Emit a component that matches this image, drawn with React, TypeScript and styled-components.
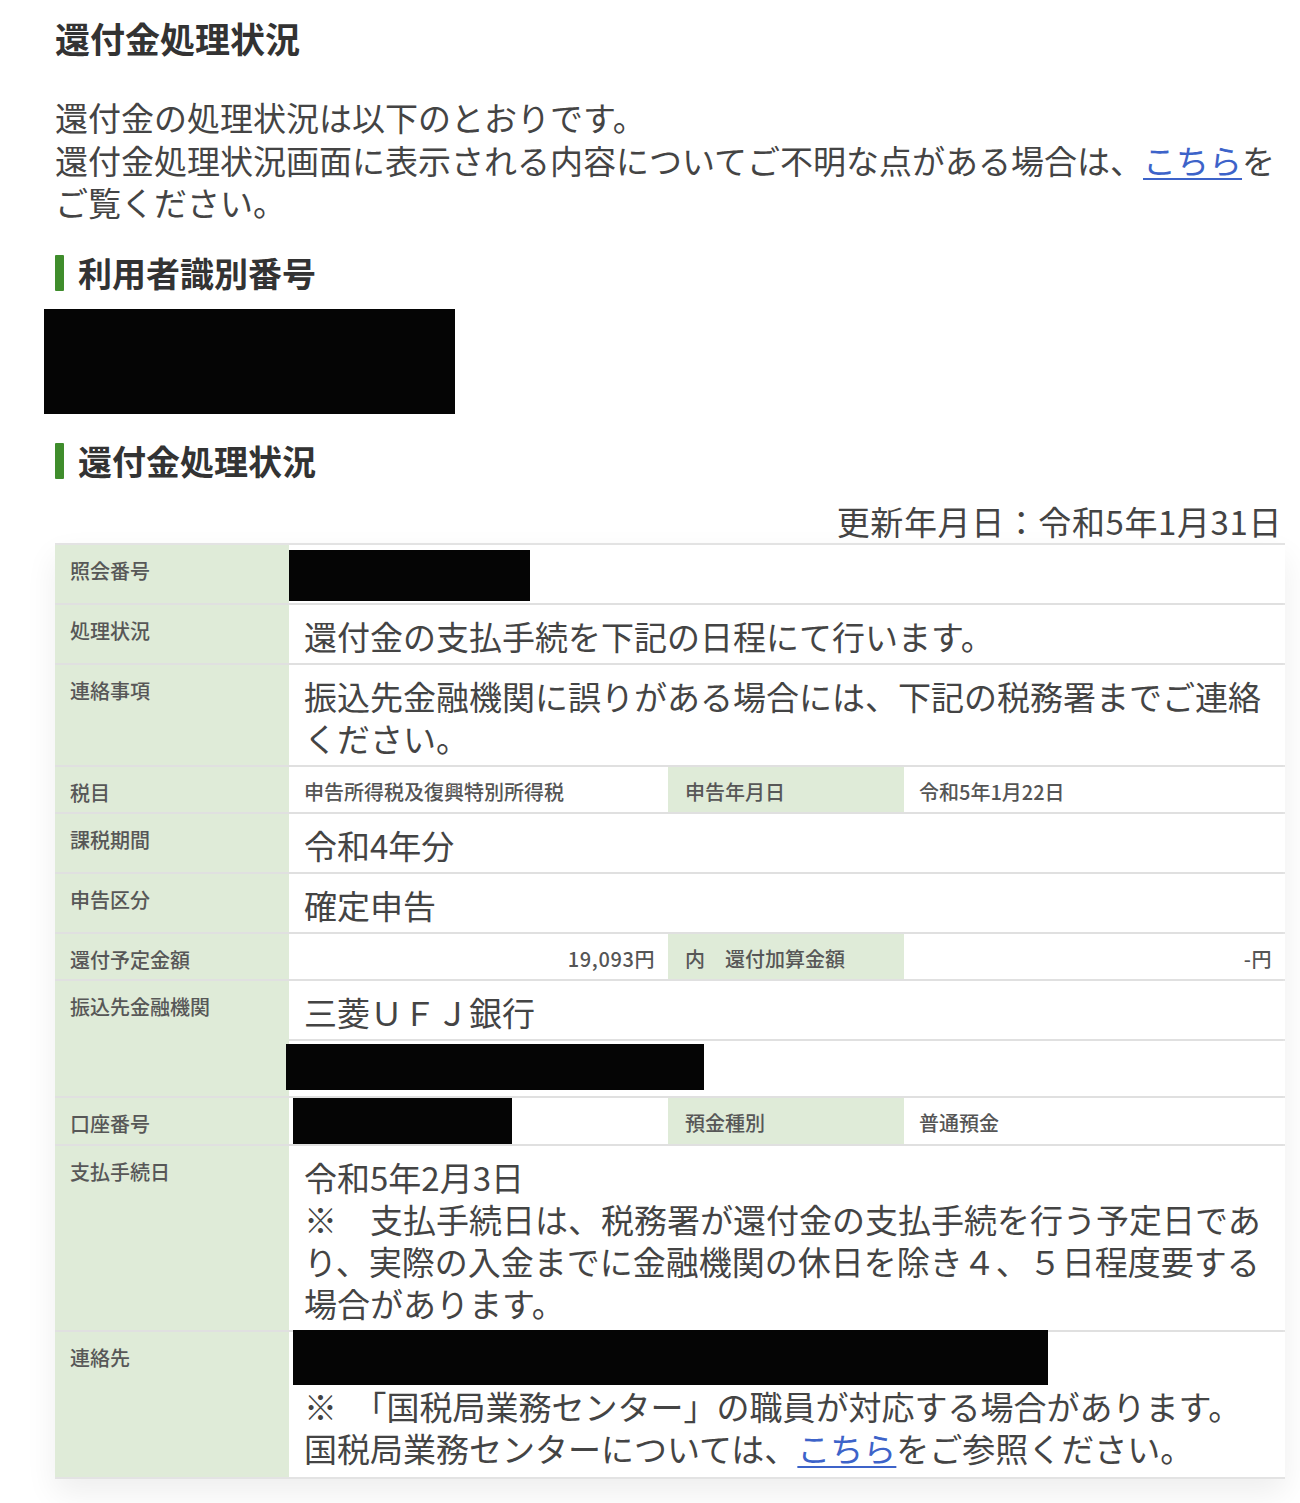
import React from "react";
import styled, { createGlobalStyle } from "styled-components";

const Global = createGlobalStyle`
  html, body { margin: 0; padding: 0; background: #fff; }
  body {
    font-family: "Noto Sans CJK JP", "Noto Sans", sans-serif;
    color: #404040;
  }
`;

const Page = styled.div`
  width: 1230px;
  padding: 14px 15px 24px 55px;
  display: flex;
  flex-direction: column;
`;

const Title = styled.h1`
  margin: 0;
  font-size: 35px;
  line-height: 48px;
  font-weight: 700;
  color: #333;
`;

const Intro = styled.p`
  margin: 34px 0 0;
  font-size: 33px;
  line-height: 42.5px;
  color: #444;
`;

const Link = styled.a`
  color: #3d63c9;
  text-decoration: underline;
  text-underline-offset: 4px;
  text-decoration-thickness: 2px;
`;

const Heading = styled.h2<{ $top: number }>`
  margin: ${(p) => p.$top}px 0 0;
  display: flex;
  align-items: center;
  gap: 14px;
  font-size: 34px;
  line-height: 36px;
  font-weight: 700;
  color: #333;
  &::before {
    content: "";
    width: 9px;
    height: 36px;
    background: #3f8d2c;
    border-radius: 1px;
  }
`;

const Redact = styled.div<{ $w: number; $h: number; $ml?: number }>`
  width: ${(p) => p.$w}px;
  height: ${(p) => p.$h}px;
  margin-left: ${(p) => p.$ml ?? 0}px;
  background: #050505;
`;

const IdBlock = styled.div`
  margin: 18px 0 0 -11px;
`;

const Updated = styled.div`
  margin-top: 21px;
  text-align: right;
  font-size: 33px;
  letter-spacing: 0.6px;
  line-height: 42px;
  color: #444;
  padding-right: 3px;
`;

const Grid = styled.div`
  margin-top: 1px;
  display: grid;
  grid-template-columns: 234px 379px 236px 381px;
  row-gap: 2px;
  background: #e0e0e0;
  border: 2px solid #e3e3e3;
  border-left: none;
  box-shadow: 0 14px 30px rgba(0, 0, 0, 0.07);
`;

const Label = styled.div<{ $span?: number }>`
  grid-column: 1;
  grid-row: ${(p) => (p.$span ? `span ${p.$span}` : "auto")};
  background: #dfebd8;
  padding: 12px 15px 4px;
  font-size: 20px;
  line-height: 28px;
  font-weight: 500;
  color: #575757;
`;

const SubLabel = styled.div`
  background: #dfebd8;
  padding: 11px 15px 6px 17px;
  font-size: 20px;
  line-height: 28px;
  font-weight: 500;
  color: #575757;
`;

const Value = styled.div<{ $wide?: boolean }>`
  grid-column: ${(p) => (p.$wide ? "2 / 5" : "auto")};
  background: #fff;
  padding: 10px 15px 6px;
  font-size: 33px;
  line-height: 42px;
  color: #444;
`;

const SmallValue = styled.div<{ $right?: boolean }>`
  background: #fff;
  padding: 11px ${(p) => (p.$right ? "13px" : "15px")} 6px 15px;
  font-size: 20px;
  line-height: 28px;
  font-weight: 500;
  color: #555;
  letter-spacing: ${(p) => (p.$right ? "0.6px" : "0")};
  text-align: ${(p) => (p.$right ? "right" : "left")};
`;

const BoxCell = styled.div<{ $wide?: boolean; $pad: string }>`
  grid-column: ${(p) => (p.$wide ? "2 / 5" : "auto")};
  background: #fff;
  padding: ${(p) => p.$pad};
`;

const ContactCell = styled.div`
  grid-column: 2 / 5;
  background: #fff;
  padding: 0 15px 8px;
  font-size: 33px;
  line-height: 42px;
  color: #444;
`;

const ContactBox = styled.div`
  width: 755px;
  height: 55px;
  margin: -2px 0 0 -11px;
  background: #050505;
`;

export default function App() {
  return (
    <>
      <Global />
      <Page>
        <Title>還付金処理状況</Title>
        <Intro>
          還付金の処理状況は以下のとおりです。
          <br />
          還付金処理状況画面に表示される内容についてご不明な点がある場合は、
          <Link href="#">こちら</Link>をご覧ください。
        </Intro>

        <Heading $top={31}>利用者識別番号</Heading>
        <IdBlock>
          <Redact $w={411} $h={105} />
        </IdBlock>

        <Heading $top={29}>還付金処理状況</Heading>
        <Updated>更新年月日：令和5年1月31日</Updated>

        <Grid>
          <Label>照会番号</Label>
          <BoxCell $wide $pad="5px 0 2px 0">
            <Redact $w={241} $h={51} />
          </BoxCell>

          <Label>処理状況</Label>
          <Value $wide>還付金の支払手続を下記の日程にて行います。</Value>

          <Label>連絡事項</Label>
          <Value $wide>
            振込先金融機関に誤りがある場合には、下記の税務署までご連絡ください。
          </Value>

          <Label>税目</Label>
          <SmallValue>申告所得税及復興特別所得税</SmallValue>
          <SubLabel>申告年月日</SubLabel>
          <SmallValue>令和5年1月22日</SmallValue>

          <Label>課税期間</Label>
          <Value $wide>令和4年分</Value>

          <Label>申告区分</Label>
          <Value $wide>確定申告</Value>

          <Label>還付予定金額</Label>
          <SmallValue $right>19,093円</SmallValue>
          <SubLabel>内　還付加算金額</SubLabel>
          <SmallValue $right>-円</SmallValue>

          <Label $span={2}>振込先金融機関</Label>
          <Value $wide>三菱ＵＦＪ銀行</Value>
          <BoxCell $wide $pad="3px 0 6px 0">
            <Redact $w={418} $h={46} $ml={-3} />
          </BoxCell>

          <Label>口座番号</Label>
          <BoxCell $pad="0 0 0 4px">
            <Redact $w={219} $h={46} />
          </BoxCell>
          <SubLabel>預金種別</SubLabel>
          <SmallValue>普通預金</SmallValue>

          <Label>支払手続日</Label>
          <Value $wide>
            令和5年2月3日
            <br />
            ※　支払手続日は、税務署が還付金の支払手続を行う予定日であり、実際の入金までに金融機関の休日を除き４、５日程度要する場合があります。
          </Value>

          <Label>連絡先</Label>
          <ContactCell>
            <ContactBox />
            ※　「国税局業務センター」の職員が対応する場合があります。
            <br />
            国税局業務センターについては、<Link href="#">こちら</Link>
            をご参照ください。
          </ContactCell>
        </Grid>
      </Page>
    </>
  );
}
